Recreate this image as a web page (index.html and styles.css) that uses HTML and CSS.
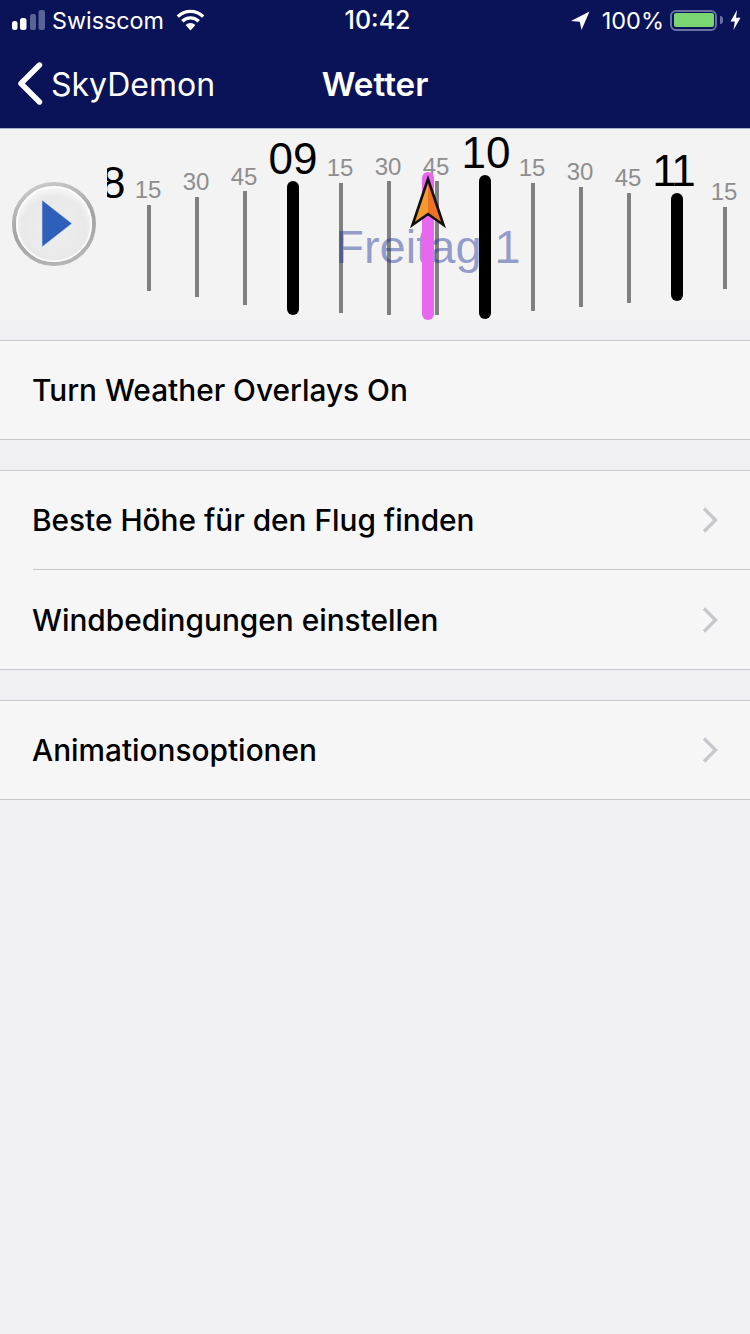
FILE: index.html
```html
<!DOCTYPE html>
<html lang="en">
<head>
  <meta charset="UTF-8">
  <meta name="viewport" content="width=device-width, initial-scale=1.0">
  <title>Wetter</title>
  <link rel="stylesheet" href="styles.css">
</head>
<body>
  <div class="header">
    <div class="status-bar">
      <div class="status-left">
        <svg class="signal" width="33" height="20" viewBox="0 0 33 20">
          <rect x="0" y="11" width="5.5" height="9" rx="2.5" fill="#fff"/>
          <rect x="8" y="8" width="6.5" height="12" rx="2.5" fill="#fff"/>
          <rect x="18" y="4" width="6" height="16" rx="2" fill="#5a6296"/>
          <rect x="26.5" y="0" width="6.5" height="20" rx="2" fill="#5a6296"/>
        </svg>
        <span class="carrier">Swisscom</span>
        <svg class="wifi" width="29" height="22" viewBox="0 0 29 22">
          <path d="M14.5 21.5 L9.6 16 A7 7 0 0 1 19.4 16 Z" fill="#fff"/>
          <path d="M6.3 12.3 A11.5 11.5 0 0 1 22.7 12.3" fill="none" stroke="#fff" stroke-width="3.4"/>
          <path d="M1.8 7.6 A18 18 0 0 1 27.2 7.6" fill="none" stroke="#fff" stroke-width="3.4"/>
        </svg>
      </div>
      <div class="clock">10:42</div>
      <div class="status-right">
        <svg class="location" width="19" height="19" viewBox="0 0 19 19">
          <path d="M0 10 L18.5 0.5 L10.5 19 L8.8 10.8 Z" fill="#fff"/>
        </svg>
        <span class="percent">100%</span>
        <div class="battery"><div class="battery-fill"></div></div>
        <div class="battery-nub"></div>
        <svg class="bolt" width="11" height="20" viewBox="0 0 11 20">
          <path d="M7 0 L0.5 11.5 L4.8 11.5 L3.5 20 L10.5 7.8 L6 7.8 Z" fill="#fff"/>
        </svg>
      </div>
    </div>
    <div class="nav-bar">
      <div class="back">
        <svg width="26" height="44" viewBox="0 0 26 44">
          <path d="M22.5 3 L4 21.5 L22.5 40" fill="none" stroke="#fff" stroke-width="5.4" stroke-linecap="round" stroke-linejoin="round"/>
        </svg>
        <span>SkyDemon</span>
      </div>
      <div class="nav-title">Wetter</div>
    </div>
  </div>

  <div class="timeline">
    <!-- viewBox uses the same y as the page so ticks read off the screenshot -->
    <svg class="timeline-canvas" width="750" height="192" viewBox="0 128 750 192">
      <defs>
        <clipPath id="scale-clip"><rect x="107" y="128" width="643" height="192"/></clipPath>
        <radialGradient id="knob" cx="50%" cy="56%" r="56%">
          <stop offset="0%" stop-color="#eeeeee"/>
          <stop offset="72%" stop-color="#e9e9e9"/>
          <stop offset="100%" stop-color="#fdfdfd"/>
        </radialGradient>
        <linearGradient id="knob-rim" x1="0.2" y1="0" x2="0.5" y2="1">
          <stop offset="0%" stop-color="#cbcbcb"/>
          <stop offset="55%" stop-color="#a2a2a2"/>
          <stop offset="100%" stop-color="#b4b4b4"/>
        </linearGradient>
      </defs>

      <g clip-path="url(#scale-clip)">
        <text class="hour" x="101" y="198">08</text>

        <line class="tick" x1="149" y1="205" x2="149" y2="291"/>
        <line class="tick" x1="197" y1="197" x2="197" y2="297"/>
        <line class="tick" x1="245" y1="191" x2="245" y2="305"/>
        <line class="tick" x1="341" y1="183" x2="341" y2="313"/>
        <line class="tick" x1="389" y1="181" x2="389" y2="315"/>
        <line class="tick" x1="437" y1="181" x2="437" y2="315"/>
        <line class="tick" x1="533" y1="183" x2="533" y2="311"/>
        <line class="tick" x1="581" y1="187" x2="581" y2="307"/>
        <line class="tick" x1="629" y1="193" x2="629" y2="303"/>
        <line class="tick" x1="725" y1="207" x2="725" y2="289"/>

        <text class="minute" x="148" y="198">15</text>
        <text class="minute" x="196" y="190">30</text>
        <text class="minute" x="244" y="185">45</text>
        <text class="minute" x="340" y="176">15</text>
        <text class="minute" x="388" y="175">30</text>
        <text class="minute" x="436" y="175">45</text>
        <text class="minute" x="532" y="176">15</text>
        <text class="minute" x="580" y="180">30</text>
        <text class="minute" x="628" y="186">45</text>
        <text class="minute" x="724" y="200">15</text>

        <text class="hour" x="293" y="174">09</text>
        <text class="hour" x="486" y="168">10</text>
        <text class="hour hour-tight" x="673" y="186">11</text>

        <text class="day" x="428" y="263">Freitag 1</text>

        <line class="tick-hour" x1="293" y1="187" x2="293" y2="309"/>
        <line class="tick-hour" x1="485" y1="181" x2="485" y2="313"/>
        <line class="tick-hour" x1="677" y1="199" x2="677" y2="295"/>
      </g>

      <line class="now" x1="428" y1="178" x2="428" y2="314"/>
      <path d="M428 179 L412.5 225 L428 214 Z" fill="#f59b30"/>
      <path d="M428 179 L443.5 225 L428 214 Z" fill="#ee7128"/>
      <path d="M428 179 L412.5 225 L428 214 L443.5 225 Z" fill="none" stroke="#111" stroke-width="2.6" stroke-linejoin="miter"/>

      <circle cx="54" cy="224" r="40" fill="url(#knob)" stroke="url(#knob-rim)" stroke-width="4"/>
      <circle cx="54" cy="224" r="37.2" fill="none" stroke="#ffffff" stroke-opacity="0.85" stroke-width="1.6"/>
      <path d="M42 200 L72 223.5 L42 247 Z" fill="#2f60b9" stroke="#d5e2f4" stroke-width="0.6"/>
    </svg>
  </div>

  <div class="group">
    <div class="row">
      <span class="row-label">Turn Weather Overlays On</span>
    </div>
  </div>

  <div class="group">
    <div class="row">
      <span class="row-label">Beste Höhe für den Flug finden</span>
      <svg class="chevron" width="16" height="28" viewBox="0 0 16 28"><path d="M2 2.5 L13.5 14 L2 25.5" fill="none" stroke="#c7c7cc" stroke-width="3.4"/></svg>
    </div>
    <div class="row row-inset">
      <span class="row-label">Windbedingungen einstellen</span>
      <svg class="chevron" width="16" height="28" viewBox="0 0 16 28"><path d="M2 2.5 L13.5 14 L2 25.5" fill="none" stroke="#c7c7cc" stroke-width="3.4"/></svg>
    </div>
  </div>

  <div class="group">
    <div class="row">
      <span class="row-label">Animationsoptionen</span>
      <svg class="chevron" width="16" height="28" viewBox="0 0 16 28"><path d="M2 2.5 L13.5 14 L2 25.5" fill="none" stroke="#c7c7cc" stroke-width="3.4"/></svg>
    </div>
  </div>
</body>
</html>
```

FILE: styles.css
```css
html, body {
  height: 100%;
}
body {
  margin: 0;
  background-color: #efeff4;
  font-family: Inter, "Liberation Sans", sans-serif;
  color: #000000;
  overflow: hidden;
}
.header {
  background-color: #0b1358;
  color: #FFFFFF;
  height: 128px;
}
.status-bar {
  height: 40px;
  padding: 0 9px 0 12px;
  display: grid;
  grid-template-columns: 1fr auto 1fr;
  align-items: center;
  font-size: 23.5px;
}
.status-left {
  display: flex;
  align-items: center;
}
.signal {
  margin-right: 7px;
}
.carrier {
  font-size: 23.3px;
}
.wifi {
  margin-left: 12px;
  margin-bottom: 1px;
}
.clock {
  font-size: 25px;
  font-weight: 500;
  padding-left: 2px;
}
.status-right {
  display: flex;
  align-items: center;
  justify-content: flex-end;
}
.percent {
  margin-left: 12px;
  margin-right: 6px;
}
.location {
  margin-top: 1px;
}
.battery {
  box-sizing: border-box;
  width: 47px;
  height: 21px;
  padding: 1.5px;
  border: 2px solid #6a70a2;
  border-radius: 6px;
}
.battery-fill {
  height: 100%;
  background-color: #7bd672;
  border-radius: 2px;
}
.battery-nub {
  width: 3px;
  height: 8px;
  margin-left: 3px;
  background-color: #6a70a2;
  border-radius: 0 4px 4px 0;
}
.bolt {
  margin-left: 7px;
}
.nav-bar {
  position: relative;
  height: 88px;
  display: flex;
  align-items: center;
  justify-content: center;
}
.back {
  position: absolute;
  left: 17px;
  top: 0;
  height: 88px;
  display: flex;
  align-items: center;
  gap: 8px;
  font-size: 32px;
}
.nav-title {
  font-weight: 600;
  font-size: 33.2px;
}
.timeline {
  box-sizing: border-box;
  height: 192px;
  background-color: #f3f3f3;
  margin-bottom: 20px;
  position: relative;
}
.timeline-canvas {
  display: block;
}
.timeline::before {
  content: "";
  position: absolute;
  left: 0;
  right: 0;
  top: 0;
  height: 1px;
  background-color: #a9aecb;
}
.tick {
  stroke: #808080;
  stroke-width: 4px;
}
.tick-hour {
  stroke: #000000;
  stroke-width: 12px;
  stroke-linecap: round;
}
.now {
  stroke: #e966ee;
  stroke-width: 12px;
  stroke-linecap: round;
}
.hour, .minute, .day {
  font-family: "Liberation Sans", Arial, sans-serif;
  text-anchor: middle;
}
.hour {
  font-size: 44px;
  fill: #000000;
}
.hour-tight {
  letter-spacing: -2px;
}
.minute {
  font-size: 24px;
  fill: #8e8e8e;
}
.day {
  font-size: 47px;
  fill: #1c2e96;
  fill-opacity: 0.45;
}
.group {
  margin-bottom: 30px;
  background-color: #f6f6f6;
  border-top: 1px solid #c8c7cc;
  border-bottom: 1px solid #c8c7cc;
}
.row {
  height: 98px;
  padding: 0 32px 0 32px;
  display: flex;
  align-items: center;
  justify-content: space-between;
}
.row-inset {
  position: relative;
  height: 99px;
  margin-top: 1px;
}
.row-inset::before {
  content: "";
  position: absolute;
  left: 33px;
  right: 0;
  top: -1px;
  height: 1px;
  background-color: #c8c7cc;
}
.row-label {
  font-size: 29.8px;
  font-weight: 500;
}
.chevron {
  flex: none;
}
```
